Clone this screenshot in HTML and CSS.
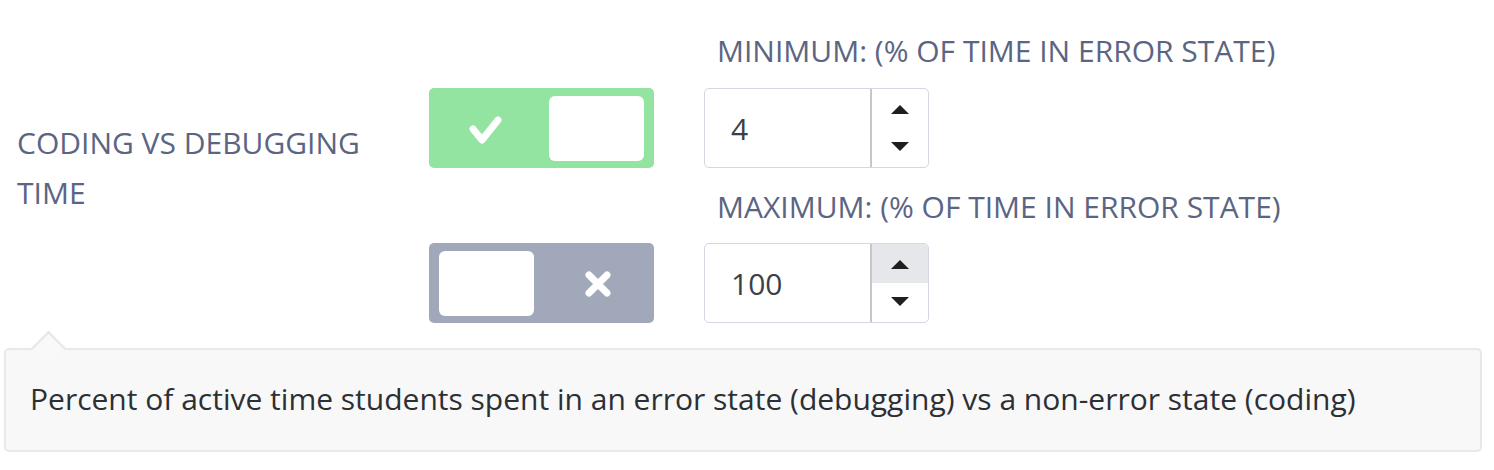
FILE: index.html
```html
<!DOCTYPE html>
<html lang="en">
<head>
<meta charset="utf-8">
<title>Coding vs debugging time</title>
<link rel="stylesheet" href="styles.css">
</head>
<body>
<div class="panel">
  <div class="metric-label">CODING VS DEBUGGING TIME</div>

  <div class="field-label row1">MINIMUM: (% OF TIME IN ERROR STATE)</div>
  <div class="toggle on row2">
    <span class="half icon-half">
      <svg width="36" height="34" viewBox="0 0 36 34"><path d="M6 17 L15 28 L31 8" fill="none" stroke="#fff" stroke-width="7" stroke-linecap="round" stroke-linejoin="round"/></svg>
    </span>
    <span class="half"><span class="knob"></span></span>
  </div>
  <div class="numbox row2">
    <div class="value">4</div>
    <div class="spin">
      <div class="step"><span class="tri up"></span></div>
      <div class="step"><span class="tri down"></span></div>
    </div>
  </div>

  <div class="field-label row3">MAXIMUM: (% OF TIME IN ERROR STATE)</div>
  <div class="toggle off row4">
    <span class="half"><span class="knob"></span></span>
    <span class="half icon-half">
      <svg width="32" height="32" viewBox="0 0 32 32"><path d="M7 7 L25 25 M25 7 L7 25" fill="none" stroke="#fff" stroke-width="7" stroke-linecap="round"/></svg>
    </span>
  </div>
  <div class="numbox row4">
    <div class="value">100</div>
    <div class="spin">
      <div class="step hover"><span class="tri up"></span></div>
      <div class="step"><span class="tri down"></span></div>
    </div>
  </div>
</div>

<div class="tooltip">
  <span class="arrow"></span>
  <p class="tip-text">Percent of active time students spent in an error state (debugging) vs a non-error state (coding)</p>
</div>
</body>
</html>
```

FILE: styles.css
```css
html, body {
  margin: 0;
  padding: 0;
  background: #ffffff;
}

body {
  font-family: "Open Sans", "Noto Sans", sans-serif;
  width: 1494px;
  height: 470px;
  overflow: hidden;
}

.panel {
  display: grid;
  grid-template-columns: 412px 275px 225px;
  grid-template-rows: 40px 80px 39px 80px;
  row-gap: 18px;
  padding: 30px 0 0 17px;
}

.metric-label {
  grid-column: 1;
  grid-row: 1 / 5;
  align-self: start;
  margin-top: 88px;
  width: 360px;
  font-size: 30px;
  line-height: 50px;
  color: #5b6583;
}

.field-label {
  grid-column: 3 / 4;
  font-size: 30px;
  line-height: 40px;
  color: #5b6583;
  white-space: nowrap;
  padding-left: 13px;
  margin-top: 1px;
}

.row1 { grid-row: 1; }
.row2 { grid-row: 2; }
.row3 { grid-row: 3; }
.row4 { grid-row: 4; }

.toggle {
  grid-column: 2;
  width: 225px;
  height: 80px;
  border-radius: 5px;
  display: flex;
  box-sizing: border-box;
  padding: 8px 10px 7px 10px;
}

.toggle.on { background: #93e3a1; }
.toggle.off { background: #a0a8ba; }

.half {
  flex: 1;
  display: flex;
  align-items: center;
  justify-content: center;
}

.toggle.on .half:last-child { justify-content: flex-end; }
.toggle.off .half:first-child { justify-content: flex-start; }

.toggle.on .icon-half { padding-right: 18px; }
.toggle.off .icon-half { padding-left: 18px; }

.knob {
  width: 95px;
  height: 65px;
  background: #ffffff;
  border-radius: 6px;
}

.icon-half svg { display: block; }

.numbox {
  grid-column: 3;
  width: 225px;
  height: 80px;
  box-sizing: border-box;
  border: 1px solid #d3d7e2;
  border-radius: 5px;
  display: flex;
  overflow: hidden;
}

.value {
  flex: 1;
  display: flex;
  align-items: center;
  padding-left: 26px;
  font-size: 30px;
  color: #3b3f46;
}

.spin {
  width: 56px;
  border-left: 2px solid #c7c7c9;
  display: flex;
  flex-direction: column;
}

.step {
  flex: 1;
  display: flex;
  align-items: center;
  justify-content: center;
}

.step.hover { background: #e5e7eb; }

.tri {
  width: 0;
  height: 0;
  border-left: 9px solid transparent;
  border-right: 9px solid transparent;
}

.tri.up {
  border-bottom: 9px solid #1f1f1f;
  margin-top: 2px;
}

.tri.down {
  border-top: 9px solid #1f1f1f;
  margin-bottom: 2px;
}

.tooltip {
  position: relative;
  margin: 25px 0 0 4px;
  width: 1478px;
  box-sizing: border-box;
  background: #f8f8f8;
  border: 2px solid #e6e8ee;
  border-radius: 5px;
  padding: 27px 24px 29px 24px;
}

.arrow {
  position: absolute;
  top: -14px;
  left: 30px;
  width: 23px;
  height: 23px;
  background: #f9f9f9;
  border-top: 2px solid #e6e6e8;
  border-left: 2px solid #e6e6e8;
  transform: rotate(45deg);
}

.tip-text {
  margin: 0;
  font-size: 30px;
  line-height: 44px;
  color: #2c3035;
  white-space: nowrap;
}
```
